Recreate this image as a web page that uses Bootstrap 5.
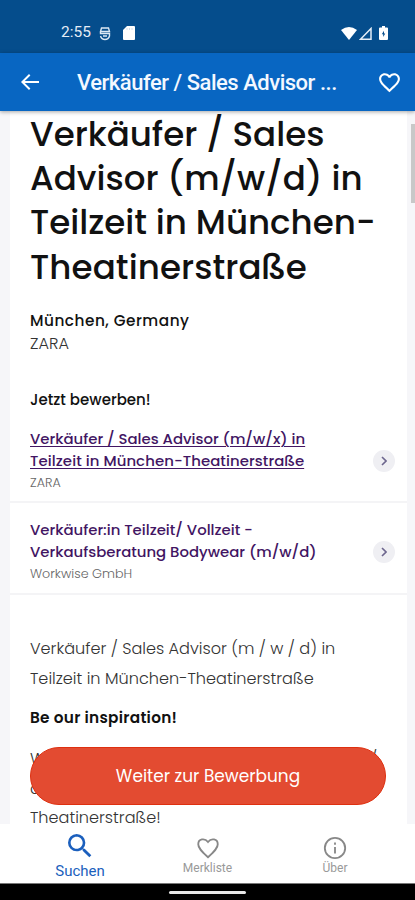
<!DOCTYPE html>
<html lang="de">
<head>
<meta charset="utf-8">
<meta name="viewport" content="width=device-width, initial-scale=1">
<title>Verkäufer / Sales Advisor</title>
<link href="https://cdn.jsdelivr.net/npm/bootstrap@5.3.0/dist/css/bootstrap.min.css" rel="stylesheet">
<style>
body{font-family:Poppins,Inter,sans-serif;color:#111;background:#fff}
.phone{height:900px;width:415px}
.statusbar{height:53px;background:#054d8c;padding:13px 27px 0 61px;font-family:Roboto,sans-serif;font-size:15.5px;color:#e4ecf6}
.appbar{height:58px;background:#0866c2;box-shadow:0 1px 4px rgba(0,0,0,.35);z-index:2;padding:0 13px 0 18px}
.appbar h1{font:500 22px/58px Roboto,sans-serif;letter-spacing:-.48px;color:#f3f8ff;margin-left:35px;padding-top:2px;white-space:nowrap}
.content-area{height:713px;background:#f6f6f9;padding:0 8px 0 10px}
.sheet{background:#fff;height:713px}
.sheet span{display:block;white-space:nowrap}
.pad{padding-left:20px}
.job-title{font-size:34.1px;font-weight:500;line-height:44.2px;padding-top:1px;height:200px}
.job-title .t4{letter-spacing:.1px}
.strong-line{font-size:15.3px;font-weight:600;line-height:24px}
.place{font-weight:500;letter-spacing:.5px}
.apply-now{font-size:15px;font-weight:500}
.slogan{letter-spacing:.28px}
.thin{font-size:16.1px;font-weight:300;line-height:29.5px;color:#333}
.sheet .full-line{width:347px;white-space:normal;text-align-last:justify}
.job-link{display:block;color:#421563;font-size:14.9px;font-weight:500;line-height:22px;text-decoration:none}
.job-link.visited-link{text-decoration:underline;text-underline-offset:2px;text-decoration-thickness:1px}
.job-link .l2{letter-spacing:.08px}
.company{font-size:12.7px;font-weight:300;line-height:22px;color:#666}
.job-row{border-bottom:2px solid #f4f4f6;padding-right:12px}
.go{width:22px;height:22px;border-radius:50%;background:#efeff3}
.cta{left:30px;top:636px;width:356px;height:58px;padding:2px 0 0;background:#e34b31;border:1px solid #de3010;border-radius:29px;color:#fff;font-size:16.95px}
.scroll-thumb{right:0;top:13px;width:4px;height:79px;background:#c8c8c8}
.bottom-nav{height:59px;background:#fff;font-family:Roboto,sans-serif;color:#888;z-index:2}
.bottom-nav a{color:inherit;text-decoration:none;font-size:12px;line-height:14px}
.bottom-nav a:not(.current) span{color:#999}
.bottom-nav .current{color:#1b5fbd;font-size:15px;line-height:19px}
.gesture{height:17px;background:#000;border-top:1px solid #777}
.gesture i{width:77px;height:3px;border-radius:2px;background:#e8e8e8}
</style>
</head>
<body>
<div class="phone d-flex flex-column overflow-hidden position-relative">
  <div class="statusbar d-flex align-items-center flex-shrink-0">
    <span>2:55</span>
    <svg class="ms-2" width="12" height="15" viewBox="0 0 12 15" fill="none" stroke="#dce7f3" stroke-width="1.400"><path d="M2.500 2h7l1 3.500H1.500zM1.500 5.500V7.500H10.500V10Q9.500 13.500 6 13.500T1.500 10M4 10h4"/></svg>
    <svg style="margin-left:12px" width="12" height="14" viewBox="0 0 12 14" fill="#fff"><path d="M4 0h7q1 0 1 1v12q0 1-1 1H1q-1 0-1-1V4z"/><path d="M4 2v2M6.500 2v2M9 2v2" stroke="#d5e0ec"/></svg>
    <svg class="ms-auto" width="16" height="13" viewBox="0 0 16 13" fill="#fff"><path d="M0 3Q8-3 16 3L8 13z"/></svg>
    <svg style="margin-left:2px" width="13" height="13" viewBox="0 0 13 13" fill="none" stroke="#e4edf7" stroke-width="1.500"><path d="M1.500 12.200H12V1.500z"/></svg>
    <svg style="margin-left:7px" width="9" height="14" viewBox="0 0 9 14"><path fill="#fff" d="M3 0h3v1.500h2q1 0 1 1V13q0 1-1 1H1q-1 0-1-1V2.500q0-1 1-1h2z"/><path fill="#054d8c" d="M5 4.800 2.800 8.300h1.400v2.700L6.300 7.500H5z"/></svg>
  </div>
  <header class="appbar d-flex align-items-center flex-shrink-0 position-relative">
    <svg width="24" height="24" viewBox="0 0 24 24" fill="#fff"><path d="M21 11H6.800l5.600-5.600L11 4l-8 8 8 8 1.400-1.400L6.800 13H21z"/></svg>
    <h1 class="mb-0">Verkäufer / Sales Advisor ...</h1>
    <svg class="ms-auto" width="25" height="25" viewBox="0 0 24 24" fill="#fff"><path d="M16.500 3c-1.740 0-3.410.81-4.500 2.090C10.910 3.810 9.240 3 7.500 3 4.420 3 2 5.420 2 8.500c0 3.780 3.400 6.860 8.550 11.540L12 21.350l1.450-1.320C18.600 15.360 22 12.280 22 8.500 22 5.420 19.580 3 16.500 3zm-4.400 15.550-.1.100-.1-.1C7.140 14.240 4 11.390 4 8.500 4 6.500 5.500 5 7.500 5c1.540 0 3.040.99 3.570 2.360h1.870C13.460 5.990 14.960 5 16.500 5c2 0 3.500 1.500 3.500 3.500 0 2.890-3.140 5.740-7.900 10.050z"/></svg>
  </header>
  <main class="content-area flex-shrink-0 position-relative overflow-hidden">
    <div class="sheet">
      <h2 class="job-title pad mb-0"><span>Verkäufer / Sales</span><span>Advisor (m/w/d) in</span><span>Teilzeit in München-</span><span class="t4">Theatinerstraße</span></h2>
      <div class="pad"><span class="strong-line place" style="margin-top:-2px">München, Germany</span><span class="thin" style="line-height:22px">ZARA</span></div>
      <div class="pad" style="padding-top:33px"><span class="strong-line apply-now">Jetzt bewerben!</span></div>
      <div class="job-row pad d-flex align-items-center justify-content-between" style="padding-top:16px;padding-bottom:7px">
        <div><a href="#" class="job-link visited-link"><span>Verkäufer / Sales Advisor (m/w/x) in</span><span class="l2">Teilzeit in München-Theatinerstraße</span></a><span class="company">ZARA</span></div>
        <div class="go d-flex align-items-center justify-content-center"><svg width="6" height="10" viewBox="0 0 6 10" fill="none" stroke="#6d668e" stroke-width="1.600"><path d="m1 1 4 4-4 4"/></svg></div>
      </div>
      <div class="job-row pad d-flex align-items-center justify-content-between" style="padding-top:16px;padding-bottom:8px">
        <div><a href="#" class="job-link"><span>Verkäufer:in Teilzeit/ Vollzeit -</span><span>Verkaufsberatung Bodywear (m/w/d)</span></a><span class="company">Workwise GmbH</span></div>
        <div class="go d-flex align-items-center justify-content-center"><svg width="6" height="10" viewBox="0 0 6 10" fill="none" stroke="#6d668e" stroke-width="1.600"><path d="m1 1 4 4-4 4"/></svg></div>
      </div>
      <div class="pad" style="padding-top:39px">
        <span class="thin">Verkäufer / Sales Advisor (m / w / d) in</span><span class="thin">Teilzeit in München-Theatinerstraße</span>
        <span class="strong-line slogan" style="margin:13px 0 14px">Be our inspiration!</span>
        <span class="thin full-line">Wir suchen dich als Verkäufer (m / w /</span><span class="thin">d) in Teilzeit in München-</span><span class="thin">Theatinerstraße!</span>
      </div>
    </div>
    <a href="#" class="cta btn position-absolute d-flex align-items-center justify-content-center"><span>Weiter zur Bewerbung</span></a>
    <div class="scroll-thumb position-absolute"></div>
  </main>
  <nav class="bottom-nav d-flex flex-shrink-0">
    <a href="#" class="current d-flex flex-column align-items-center" style="width:160px;padding-top:6px"><svg width="32" height="32" viewBox="0 0 24 24" fill="currentColor"><path d="M15.500 14h-.79l-.28-.27A6.471 6.471 0 0 0 16 9.500 6.500 6.500 0 1 0 9.500 16c1.610 0 3.090-.59 4.230-1.570l.27.28v.79l5 4.990L20.490 19l-4.990-5zm-6 0C7.010 14 5 11.990 5 9.500S7.010 5 9.500 5 14 7.010 14 9.500 11.990 14 9.500 14z"/></svg><span>Suchen</span></a>
    <a href="#" class="d-flex flex-column align-items-center" style="width:95px;padding-top:10.500px"><svg width="26" height="26" viewBox="0 0 24 24" fill="none" stroke="currentColor" stroke-width="1.700"><path d="M12 20.500C5.500 14.700 3 12 3 8.500 3 3.500 9 2.500 12 6.500 15 2.500 21 3.500 21 8.500 21 12 18.500 14.700 12 20.500z"/></svg><span>Merkliste</span></a>
    <a href="#" class="d-flex flex-column align-items-center" style="width:160px;padding-top:10.500px"><svg width="26" height="26" viewBox="0 0 24 24" fill="none" stroke="currentColor" stroke-width="1.700"><circle cx="12" cy="12" r="9.400"/><path d="M12 11v6M12 7v2"/></svg><span>Über</span></a>
  </nav>
  <div class="gesture d-flex align-items-center justify-content-center flex-shrink-0"><i></i></div>
</div>
<script src="https://cdn.jsdelivr.net/npm/bootstrap@5.3.0/dist/js/bootstrap.bundle.min.js"></script>
</body>
</html>
